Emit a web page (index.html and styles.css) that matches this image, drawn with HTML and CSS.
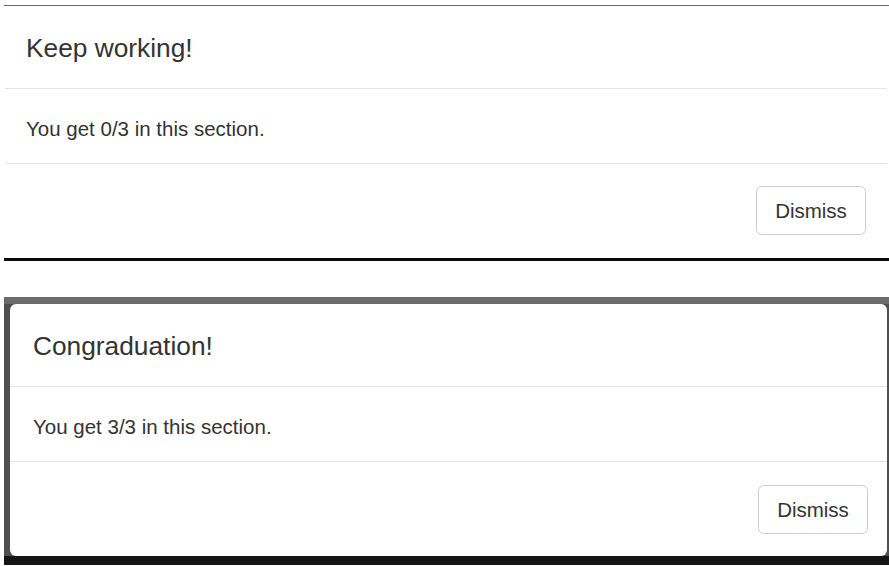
FILE: index.html
```html
<!DOCTYPE html>
<html lang="en">
<head>
<meta charset="utf-8">
<title>Modals</title>
<link rel="stylesheet" href="styles.css">
</head>
<body>
  <div class="shot shot-one">
    <div class="modal">
      <div class="modal-header"><h4 class="modal-title">Keep working!</h4></div>
      <div class="modal-body">You get 0/3 in this section.</div>
      <div class="modal-footer"><button class="btn" type="button">Dismiss</button></div>
    </div>
  </div>
  <div class="shot shot-two">
    <div class="modal">
      <div class="modal-header"><h4 class="modal-title">Congraduation!</h4></div>
      <div class="modal-body">You get 3/3 in this section.</div>
      <div class="modal-footer"><button class="btn" type="button">Dismiss</button></div>
    </div>
  </div>
</body>
</html>
```

FILE: styles.css
```css
html, body {
  margin: 0;
  padding: 0;
  background: #ffffff;
}

body {
  font-family: "Liberation Sans", Arial, Helvetica, sans-serif;
  color: #333333;
  font-size: 20.5px;
}

.shot {
  margin-left: 4px;
  width: 885px;
  box-sizing: border-box;
}

.shot-one {
  margin-top: 5px;
  border-top: 1px solid #6a6a6a;
  border-bottom: 3px solid #0b0b0b;
  padding-right: 2px;
  background: #ffffff;
}

.shot-one .modal {
  margin-left: 1px;
  border-top-right-radius: 4px;
}

.shot-two {
  margin-top: 36px;
  height: 268px;
  padding: 7px 2px 9px 6px;
  background: linear-gradient(to bottom, #6b6b6b 0, #6b6b6b 7px, #4f4f4f 7px, #4f4f4f 259px, #151515 259px);
}

.shot-two .modal {
  border-radius: 6px;
  height: 252px;
}

.modal {
  background: #ffffff;
  border-radius: 0 0 6px 0;
  box-sizing: border-box;
}

.modal-header {
  padding: 22px 21px 19px 21px;
  border-bottom: 1px solid #e5e5e5;
}

.shot-two .modal-header,
.shot-two .modal-body {
  padding-left: 23px;
}

.modal-title {
  margin: 0;
  font-size: 26.3px;
  font-weight: normal;
  line-height: 41px;
  color: #333333;
}

.modal-body {
  padding: 24px 21px 18px 21px;
  line-height: 32px;
  font-size: 20.5px;
}

.modal-footer {
  display: flex;
  justify-content: flex-end;
  padding: 22px 21px 23px 21px;
  border-top: 1px solid #e5e5e5;
}

.shot-two .modal-footer {
  padding-top: 23px;
  padding-right: 19px;
}

.btn {
  font-family: "Liberation Sans", Arial, Helvetica, sans-serif;
  font-size: 20.5px;
  color: #333333;
  background: #ffffff;
  border: 1px solid #cccccc;
  border-radius: 5.7px;
  width: 110px;
  height: 49px;
  padding: 0;
  line-height: 47px;
}
```
